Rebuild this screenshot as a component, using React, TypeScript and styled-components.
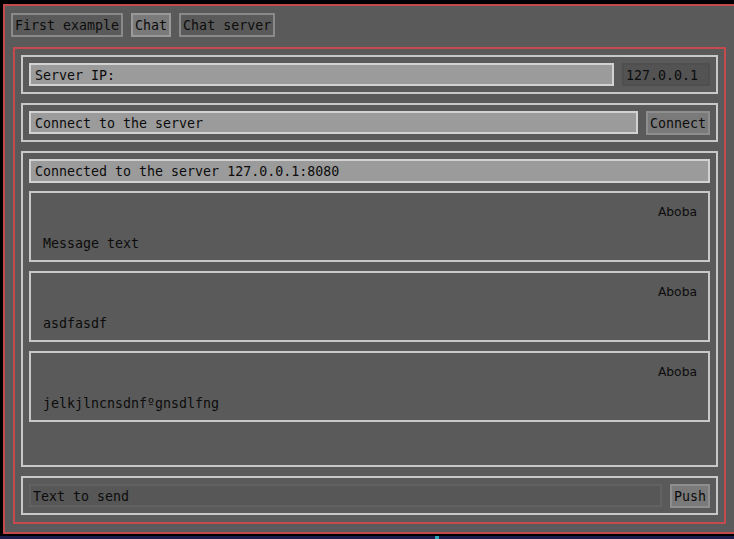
import React from "react";
import styled, { createGlobalStyle } from "styled-components";

const Global = createGlobalStyle`
  html, body { margin: 0; padding: 0; background: #000; overflow: hidden; }
  body { width: 734px; height: 539px; }
  * { box-sizing: border-box; }
`;

const MONO = `"DejaVu Sans Mono", "Liberation Mono", monospace`;
const SANS = `"DejaVu Sans", "Noto Sans", sans-serif`;

const Screen = styled.div`
  width: 734px;
  height: 539px;
  display: flex;
  flex-direction: column;
  padding-top: 4px;
  padding-left: 3px;
`;

const Window = styled.div`
  width: 745px;
  height: 530px;
  border: 2px solid #c54a4d;
  background: #5a5a5a;
  display: flex;
  flex-direction: column;
  padding: 7px 0 8px 6px;
  gap: 10px;
  font-family: ${MONO};
  font-size: 13.3px;
  color: #0c0c0c;
`;

const TabBar = styled.div`
  display: flex;
  gap: 8px;
  height: 24px;
`;

const Tab = styled.div<{ $active?: boolean }>`
  height: 24px;
  padding: 1px 2px 0;
  display: flex;
  align-items: center;
  border: 2px solid ${(p) => (p.$active ? "#999999" : "#8a8a8a")};
  background: ${(p) => (p.$active ? "#7a7a7a" : "#5a5a5a")};
  white-space: pre;
`;

const Panel = styled.div`
  width: 713px;
  margin-left: 2px;
  flex: 1;
  border: 2px solid #c54a4d;
  padding: 6px 6px 7px 6px;
  display: flex;
  flex-direction: column;
  gap: 9px;
`;

const Row = styled.div`
  height: 39px;
  border: 2px solid #c8c8c8;
  padding: 0 6px;
  display: flex;
  align-items: center;
  gap: 8px;
`;

const Column = styled.div`
  flex: 1;
  border: 2px solid #c8c8c8;
  padding: 6px;
  display: flex;
  flex-direction: column;
  gap: 8px;
`;

const MessageList = styled.div`
  display: flex;
  flex-direction: column;
  gap: 9px;
`;

const Field = styled.div<{ $tall?: boolean }>`
  flex: ${(p) => (p.$tall ? "none" : "1")};
  height: ${(p) => (p.$tall ? "24px" : "23px")};
  border: 2px solid #d2d2d2;
  background: #9b9b9b;
  padding: 1px 4px 0;
  display: flex;
  align-items: center;
  white-space: pre;
`;

const IpField = styled.div`
  width: 88px;
  height: 23px;
  border: 2px solid #4f4f4f;
  background: #535353;
  padding: 1px 2px 0;
  display: flex;
  align-items: center;
`;

const Button = styled.div`
  height: 24px;
  border: 2px solid #8e8e8e;
  background: #7a7a7a;
  padding: 1px 2px 0;
  display: flex;
  align-items: center;
`;

const Message = styled.div`
  height: 71px;
  border: 2px solid #c8c8c8;
  padding: 11px 11px 0 12px;
  display: flex;
  flex-direction: column;
  gap: 16px;
`;

const Author = styled.div`
  font-family: ${SANS};
  font-size: 12.3px;
  line-height: 16px;
  text-align: right;
`;

const Body = styled.div`
  line-height: 16px;
  white-space: pre;
`;

const SendInput = styled.div`
  flex: 1;
  height: 23px;
  border: 2px solid #626262;
  background: #575757;
  padding: 1px 2px 0;
  display: flex;
  align-items: center;
  white-space: pre;
`;

const Taskbar = styled.div`
  margin-top: 2px;
  margin-left: -3px;
  height: 3px;
  background: #1c1c4c;
  display: flex;
`;

const TaskbarDot = styled.div`
  margin-left: 435px;
  width: 4px;
  background: #2aa7b8;
`;

const messages = [
  { author: "Aboba", text: "Message text" },
  { author: "Aboba", text: "asdfasdf" },
  { author: "Aboba", text: "jelkjlncnsdnfºgnsdlfng" },
];

export default function App() {
  return (
    <>
      <Global />
      <Screen>
        <Window>
          <TabBar>
            <Tab>First example</Tab>
            <Tab $active>Chat</Tab>
            <Tab>Chat server</Tab>
          </TabBar>
          <Panel>
            <Row>
              <Field>Server IP:</Field>
              <IpField>127.0.0.1</IpField>
            </Row>
            <Row>
              <Field>Connect to the server</Field>
              <Button>Connect</Button>
            </Row>
            <Column>
              <Field $tall>Connected to the server 127.0.0.1:8080</Field>
              <MessageList>
                {messages.map((m, i) => (
                  <Message key={i}>
                    <Author>{m.author}</Author>
                    <Body>{m.text}</Body>
                  </Message>
                ))}
              </MessageList>
            </Column>
            <Row>
              <SendInput>Text to send</SendInput>
              <Button>Push</Button>
            </Row>
          </Panel>
        </Window>
        <Taskbar>
          <TaskbarDot />
        </Taskbar>
      </Screen>
    </>
  );
}
